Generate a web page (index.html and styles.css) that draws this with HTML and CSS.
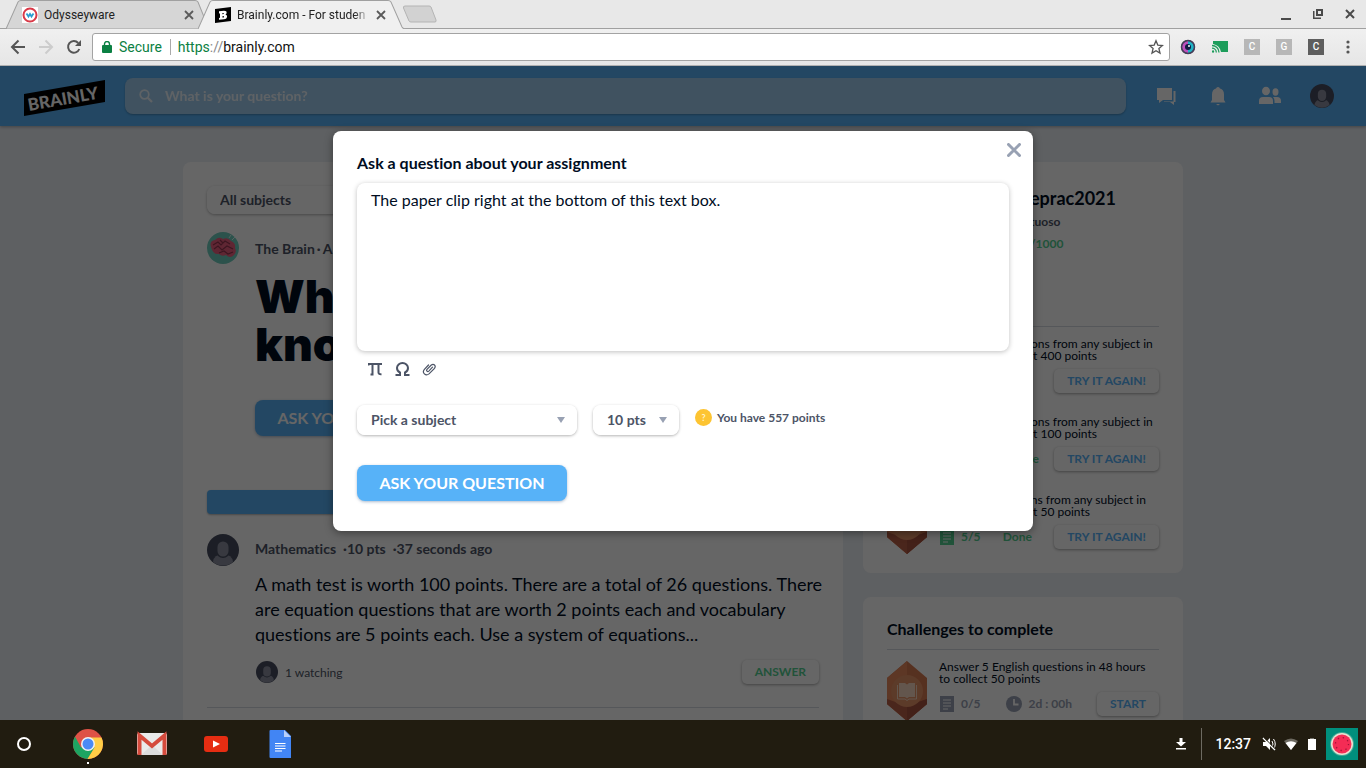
FILE: index.html
```html
<!DOCTYPE html>
<html lang="en">
<head>
<meta charset="utf-8">
<title>Brainly.com - For students</title>
<link rel="stylesheet" href="styles.css">
</head>
<body>
<svg class="defs" aria-hidden="true">
  <defs>
    <symbol id="person" viewBox="0 0 32 32">
      <circle cx="16" cy="16" r="16" fill="#474d60"/>
      <path d="M6 28a10 8 0 0 1 20 0 16 16 0 0 1-20 0z" fill="#8d90a0"/>
      <rect x="9" y="6" width="14" height="18" rx="7" fill="#474d60"/>
      <rect x="10.500" y="7.500" width="11" height="15" rx="5.500" fill="#8d90a0"/>
    </symbol>
    <symbol id="sheet" viewBox="0 0 14 16">
      <path d="M0 0h14v16H0z" fill="currentColor"/>
      <path d="M3 4h8M3 7h8M3 10h8M3 13h5" stroke="#fff" stroke-width="1"/>
    </symbol>
    <symbol id="gem" viewBox="0 0 40 60">
      <path d="M20 0l20 17v26L20 60 0 43V17z" fill="#d87a51"/>
      <path d="M20 0v60L0 43V17z" fill="#e8895c"/>
      <path d="M0 38l20 7 20-7v5L20 60 0 43z" fill="#b85f48"/>
      <path d="M20 45l20-7v5L20 60z" fill="#a9533f"/>
      <circle cx="20" cy="30" r="16" fill="#e69366"/>
    </symbol>
    <symbol id="tabx" viewBox="0 0 10 10"><path d="M1 1l8 8M9 1L1 9" stroke="#5a5a5a" stroke-width="1.800"/></symbol>
  </defs>
</svg>

<div class="tabs">
  <div class="tab">
    <svg class="tab-shape" viewBox="0 0 200 28" preserveAspectRatio="none"><path d="M0 28L12 2Q13 .5 15 .5H189Q191 .5 192 2L200 21 197 28z" fill="#d6d6d6" stroke="#a0a0a0"/></svg>
    <svg width="16" height="16" viewBox="0 0 16 16"><path d="M0 0h16v16H0z" fill="#fff"/><circle cx="8" cy="8" r="6.500" fill="#fff" stroke="#d93a48" stroke-width="2"/><path d="M4.500 6.500l2 3L8 7l1.500 2.500 2-3" fill="none" stroke="#2b9ed0" stroke-width="1.800"/></svg>
    <span class="tab-title">Odysseyware</span>
    <button class="plain" aria-label="Close tab"><svg width="10" height="10"><use href="#tabx"/></svg></button>
  </div>
  <div class="tab active">
    <svg class="tab-shape" viewBox="0 0 208 28" preserveAspectRatio="none"><path d="M0 28L12 2Q13 .5 15 .5H190Q192 .5 193 2L204 26Q205 28 208 28" fill="#f0f0f0" stroke="#a0a0a0"/></svg>
    <svg width="16" height="16" viewBox="0 0 16 16"><path d="M0 2l16-2v14L0 16z" fill="#000"/><path fill-rule="evenodd" d="M4 4.200l5-.5q3 0 2.600 2.200-.2 1-1.200 1.500 1.800.3 1.700 2.100-.2 2.500-3.100 2.800l-5 .5V11l1-.2V6.400l-1 .1zM7.400 6v1.300l1.300-.2V5.900zM7.400 9.200v1.400l1.500-.2V9z" fill="#fff"/></svg>
    <span class="tab-title fade">Brainly.com - For studen</span>
    <button class="plain" aria-label="Close tab"><svg width="10" height="10"><use href="#tabx"/></svg></button>
  </div>
  <button class="plain newtab" aria-label="New tab"><svg width="35" height="18" viewBox="0 0 35 18"><path d="M3 1H27Q28.500 1 29 2L34 15Q34.500 17 33 17H9Q7.500 17 7 16L1.500 3Q1 1 3 1z" fill="#d2d2d2" stroke="#b4b4b4"/></svg></button>
  <div class="window-buttons">
    <button class="plain" aria-label="Minimize"><svg width="10" height="12"><path d="M0 10h10v2H0z" fill="#4a4a4a"/></svg></button>
    <button class="plain" aria-label="Restore"><svg width="10" height="10" viewBox="0 0 10 10" fill="none" stroke="#4a4a4a"><path d="M4 1h5v5H4z" stroke-width="2"/><path d="M.75 2v7.250H8" stroke-width="1.500"/></svg></button>
    <button class="plain" aria-label="Close window"><svg width="10" height="10" viewBox="0 0 10 10"><path d="M1 1l8 8M9 1L1 9" stroke="#4a4a4a" stroke-width="2"/></svg></button>
  </div>
</div>

<div class="toolbar">
  <button class="plain" aria-label="Back"><svg width="16" height="16" viewBox="0 0 16 16" fill="none" stroke="#555" stroke-width="2"><path d="M15 8H2M8.500 1.500L2 8l6.500 6.500"/></svg></button>
  <button class="plain" aria-label="Forward"><svg width="16" height="16" viewBox="0 0 16 16" fill="none" stroke="#ccc" stroke-width="2"><path d="M1 8h13M7.500 1.500L14 8l-6.500 6.500"/></svg></button>
  <button class="plain" aria-label="Reload"><svg width="16" height="16" viewBox="0 0 16 16"><path d="M13.300 10A5.800 5.800 0 1 1 12.200 4" fill="none" stroke="#555" stroke-width="2"/><path d="M15 1v6H9z" fill="#555"/></svg></button>
  <div class="address">
    <svg width="10" height="12" viewBox="0 0 10 12"><rect y="4" width="10" height="8" rx="1" fill="#0b8043"/><path d="M2.500 5V3a2.500 2.500 0 0 1 5 0v2" fill="none" stroke="#0b8043" stroke-width="1.400"/></svg>
    <span class="secure">Secure</span>
    <span class="url"><span class="https">https</span><span class="slashes">://</span>brainly.com</span>
    <button class="plain" aria-label="Bookmark"><svg width="16" height="16" viewBox="0 0 16 16"><path d="M8 1.800l1.800 4.300 4.700.4-3.600 3 1.100 4.600L8 11.700l-4 2.400 1.100-4.600-3.600-3 4.700-.4z" fill="none" stroke="#555" stroke-width="1.300"/></svg></button>
  </div>
  <div class="extensions">
    <svg width="16" height="16" viewBox="0 0 16 16"><circle cx="8" cy="8" r="7" fill="#55306e"/><path d="M8 2a6 6 0 0 0 0 12z" fill="#bd50bd"/><path d="M8 2a6 6 0 0 1 0 12z" fill="#1fb3c6"/><circle cx="8" cy="8" r="6.500" fill="none" stroke="#453f58" stroke-width="1.500"/><circle cx="8" cy="8" r="3" fill="#121b42"/><circle cx="9" cy="7" r="1" fill="#fff"/></svg>
    <svg width="16" height="12" viewBox="0 0 16 12"><path d="M1 0h15v11H9Q7.500 4 1 3z" fill="#1d9d5b"/><g fill="none" stroke="#1d9d5b" stroke-width="1.300"><path d="M0 4.500A7 7 0 0 1 7 11.500M0 7.200a4.300 4.300 0 0 1 4.300 4.300"/></g><circle cx="1" cy="10.500" r="1.200" fill="#1d9d5b"/></svg>
    <span class="ext">C</span><span class="ext">G</span><span class="ext dark">C</span>
    <svg width="16" height="14" viewBox="0 0 16 14" fill="#555"><circle cx="8" cy="2" r="1.600"/><circle cx="8" cy="7" r="1.600"/><circle cx="8" cy="12" r="1.600"/></svg>
  </div>
</div>

<div class="page">
  <header class="site-header">
    <svg width="81" height="40" viewBox="0 -4 81 40"><path d="M0 14L81 0v22L0 36z" fill="#000"/><text x="5" y="31" class="logo-text" transform="rotate(-10 5 31)">BRAINLY</text></svg>
    <label class="search">
      <svg width="14" height="14" viewBox="0 0 14 14" fill="none" stroke="#fff" opacity=".8"><circle cx="5.500" cy="5.500" r="4.300" stroke-width="1.700"/><path d="M8.700 8.700L13 13" stroke-width="2.200"/></svg>
      <input type="text" placeholder="What is your question?" aria-label="What is your question?">
    </label>
    <nav class="site-nav">
      <svg width="24" height="24" viewBox="0 0 24 24" fill="#fff"><path d="M3 4h15v12H9l-4 3v-3H3z"/><path d="M19.500 7H21.500v11H20v3l-4-3h-6v-.5h9.500z"/></svg>
      <svg width="24" height="24" viewBox="0 0 24 24" fill="#fff"><path d="M12 3a2 2 0 0 1 2 1.500q4 1 4 6V16l1.500 2.500h-15L6 16v-5.500q0-5 4-6A2 2 0 0 1 12 3z"/><path d="M10 20h4l-2 1.500z"/></svg>
      <svg width="24" height="24" viewBox="0 0 24 24" fill="#fff"><ellipse cx="8" cy="7" rx="4" ry="4.300"/><path d="M1 20v-3q0-4 4-4h6q4 0 4 4v3z"/><ellipse cx="17.500" cy="8" rx="3" ry="3.700"/><path d="M16.500 19v-2q0-2.500-1.500-4h4q4 0 4 4v2z"/></svg>
      <svg width="24" height="24"><use href="#person"/></svg>
    </nav>
  </header>

  <div class="content">
    <main class="card feed">
      <div class="picker filter">
        <select aria-label="Subject filter"><option>All subjects</option></select>
      </div>
      <article class="post">
        <svg width="32" height="32" viewBox="0 0 32 32"><circle cx="16" cy="16" r="16" fill="#6fcdbd"/><path d="M4 15Q2 9 8 8q4-4 8-1 5-2 8 2 5 2 4 7 2 4-1 7-4 4-8 0-4 2-7-1-6 1-8-7z" fill="#ee5f80"/><path d="M6 13l5-3 3 3 4-4 5 3M7 17l4-3 4 4 5-4 6 3M12 21l5-2 4 3 5-2M13 8l3 3" fill="none" stroke="#963751" stroke-width="1.200"/><path d="M22 6l2-3M25 8l3-3" stroke="#d8f4ef"/></svg>
        <div class="post-body">
          <p class="meta"><span>The Brain</span><span>·</span><span>A few seconds ago</span></p>
          <h1>What do you<br>know?</h1>
          <button class="primary">ASK YOUR QUESTION</button>
        </div>
      </article>
      <div class="banner"></div>
      <article class="post question">
        <svg width="32" height="32"><use href="#person"/></svg>
        <div class="post-body">
          <p class="meta spaced"><span>Mathematics</span><span>·10 pts</span><span>·37 seconds ago</span></p>
          <p class="body-text">A math test is worth 100 points. There are a total of 26 questions. There are equation questions that are worth 2 points each and vocabulary questions are 5 points each. Use a system of equations...</p>
          <div class="post-foot">
            <svg width="22" height="22"><use href="#person"/></svg>
            <span>1 watching</span>
            <button class="small green">ANSWER</button>
          </div>
        </div>
      </article>
    </main>

    <aside class="side">
      <section class="card side-card">
        <div class="profile">
          <h2>eprac2021</h2>
          <p>tuoso</p>
          <p class="green">/1000</p>
        </div>
        <ul class="challenges">
          <li><svg width="40" height="60"><use href="#gem"/></svg>
            <div><p>Answer 20 questions from any subject in 24 hours to collect 400 points</p>
              <div class="status green"><svg width="14" height="16"><use href="#sheet"/></svg><span>20</span><span class="state">Done</span><button class="small blue">TRY IT AGAIN!</button></div></div></li>
          <li><svg width="40" height="60"><use href="#gem"/></svg>
            <div><p>Answer 10 questions from any subject in 24 hours to collect 100 points</p>
              <div class="status green"><svg width="14" height="16"><use href="#sheet"/></svg><span>10/10</span><span class="state">Done</span><button class="small blue">TRY IT AGAIN!</button></div></div></li>
          <li><svg width="40" height="60"><use href="#gem"/></svg>
            <div><p>Answer 5 questions from any subject in 24 hours to collect 50 points</p>
              <div class="status green"><svg width="14" height="16"><use href="#sheet"/></svg><span>5/5</span><span class="state">Done</span><button class="small blue">TRY IT AGAIN!</button></div></div></li>
        </ul>
      </section>
      <section class="card side-card">
        <h3>Challenges to complete</h3>
        <ul class="challenges">
          <li><svg width="40" height="60" viewBox="0 0 40 60"><use href="#gem"/><path d="M12 22h6l2 1.500 2-1.500h6v14h-6l-2 1.500-2-1.500h-6z" fill="#f7d6c0"/><path d="M10.500 24v14H18l2 1.500 2-1.500h7.500V24" fill="none" stroke="#f7d6c0"/></svg>
            <div><p>Answer 5 English questions in 48 hours to collect 50 points</p>
              <div class="status"><svg width="14" height="16"><use href="#sheet"/></svg><span>0/5</span>
                <span class="state timer"><svg width="16" height="16" viewBox="0 0 16 16"><circle cx="8" cy="8" r="8" fill="currentColor"/><path d="M8 3v5.500h4.500" fill="none" stroke="#fff" stroke-width="1.800"/></svg>2d : 00h</span>
                <button class="small blue">START</button></div></div></li>
        </ul>
      </section>
    </aside>
  </div>

  <div class="overlay">
    <form class="modal" role="dialog" aria-labelledby="ask-title">
      <button type="button" class="plain close" aria-label="Close"><svg width="14" height="14" viewBox="0 0 14 14"><path d="M1.500 1.500l11 11M12.500 1.500l-11 11" stroke="#98a1b3" stroke-width="3" stroke-linecap="round"/></svg></button>
      <label id="ask-title" for="ask">Ask a question about your assignment</label>
      <textarea id="ask">The paper clip right at the bottom of this text box.</textarea>
      <div class="tools">
        <button type="button" class="plain" aria-label="Equation"><svg width="15" height="14" viewBox="0 0 15 14" fill="none" stroke="#4c5466" stroke-width="2"><path d="M.5 3.500V2H14M4.500 2v11M10.500 2v8.500q0 2 3 1.700M2.500 12.500h3"/></svg></button>
        <button type="button" class="plain" aria-label="Symbols"><svg width="15" height="14" viewBox="0 0 15 14" fill="none" stroke="#4c5466" stroke-width="2"><path d="M.5 13H5v-2.500Q2 9 2 6a5.500 5 0 0 1 11 0q0 3-3 4.500V13h4.500"/></svg></button>
        <button type="button" class="plain" aria-label="Attach file"><svg width="15" height="14" viewBox="0 0 15 14" fill="none" stroke="#4c5466" stroke-width="1.200" stroke-linecap="round"><path d="M10.500 5.200L6.800 9.100Q5.800 9.900 5 9.100t0-1.700L9.300 3q1.800-1.400 3.200 0t0 3.400L7 11.900q-2.500 2-4.600 0t0-4.600L6.500 3"/></svg></button>
      </div>
      <div class="options">
        <div class="picker subject"><select aria-label="Subject"><option>Pick a subject</option></select></div>
        <div class="picker points"><select aria-label="Points"><option>10 pts</option></select></div>
        <p class="balance"><span class="coin">?</span>You have 557 points</p>
      </div>
      <button type="button" class="primary">ASK YOUR QUESTION</button>
    </form>
  </div>
</div>

<footer class="shelf">
  <svg width="48" height="48" viewBox="0 0 48 48"><circle cx="24" cy="24" r="6" fill="none" stroke="#fff" stroke-width="2"/></svg>
  <svg width="48" height="48" viewBox="0 0 48 48"><circle cx="24" cy="24" r="15" fill="#de5246"/><path d="M11 16.500A15 15 0 0 0 23.500 39L31 27.500 24 24l-7 3.500z" fill="#1da462"/><path d="M37.500 17.500H24l6.500 10L23.500 39A15 15 0 0 0 37.500 17.500z" fill="#ffcd46"/><circle cx="24" cy="24" r="7" fill="#f1f1f1"/><circle cx="24" cy="24" r="5.500" fill="#4a8af4"/><path d="M23 42h2v2h-2z" fill="#fff"/></svg>
  <svg width="48" height="48" viewBox="0 0 48 48"><rect x="9" y="13" width="30" height="22" rx="2" fill="#eaeaea"/><path d="M13 35l11-10 11 10z" fill="#dcdcdc"/><path d="M11.500 35V15.500L24 26l12.500-10.500V35" fill="none" stroke="#d54b3d" stroke-width="4"/></svg>
  <svg width="48" height="48" viewBox="0 0 48 48"><rect x="12" y="16" width="24" height="16" rx="3" fill="#e62d12"/><path d="M21 20.500l7 3.500-7 3.500z" fill="#fff"/></svg>
  <svg width="48" height="48" viewBox="0 0 48 48"><path d="M14.500 10H29l6 6v22H14.500q-1 0-1-1V11q0-1 1-1z" fill="#4285f4"/><path d="M28 10l7 7h-7z" fill="#b8d0fb"/><path d="M19 23.500h10.500M19 26h10.500M19 28.500h10.500M19 31h7" stroke="#fff" stroke-width="1.200"/></svg>
  <div class="tray">
    <svg width="10" height="12" viewBox="0 0 10 12" fill="#fff"><path d="M3.500 0h3v4H10L5 8.500 0 4h3.500zM0 10h10v1.500H0z"/></svg>
    <span class="clock">12:37</span>
    <svg width="14" height="14" viewBox="0 0 14 14"><path d="M1 5h3l4-4v12L4 9H1z" fill="#fff"/><path d="M10 4q2 3 0 6M11.500 2q3.500 5 0 10" fill="none" stroke="#fff"/><path d="M1 1l12 12" stroke="#fff" stroke-width="1.500"/><path d="M2.500 1l11 11" stroke="#211c10" stroke-width="1"/></svg>
    <svg width="14" height="12" viewBox="0 0 14 12"><path d="M0 3q7-5 14 0L7 12z" fill="#6d6a61"/><path d="M1.500 5q5.500-3.500 11 0L7 12z" fill="#fff"/></svg>
    <svg class="battery" width="8" height="12" viewBox="0 0 8 12"><path d="M2 0h4v1H2z" fill="#77746c"/><path d="M0 1h8v11H0z" fill="#fff"/></svg>
    <svg width="32" height="32" viewBox="0 0 32 32"><path d="M0 0h32v32H0z" fill="#008f7c"/><circle cx="16" cy="16" r="12" fill="#45ab98"/><circle cx="16" cy="16" r="11" fill="#ece0d0"/><circle cx="16" cy="16" r="9.500" fill="#f42c55"/><circle cx="16" cy="16" r="6.500" fill="none" stroke="#a01436" stroke-width="1.300" stroke-dasharray="1.300 3.800"/></svg>
  </div>
</footer>
</body>
</html>
```
FILE: styles.css
```css
* { box-sizing: border-box; }

body {
  margin: 0;
  height: 100vh;
  display: flex;
  flex-direction: column;
  overflow: hidden;
  font-family: Lato, "Liberation Sans", sans-serif;
  font-variant-ligatures: none;
  color: #000d1f;
}

h1, h2, h3, p, ul { margin: 0; padding: 0; }
svg { display: block; flex: none; }
button, select, input, textarea { font: inherit; font-variant-ligatures: none; color: inherit; }
button { cursor: pointer; }
.plain { border: 0; padding: 0; background: none; }
.defs { position: absolute; width: 0; height: 0; }

/* browser frame */
.tabs {
  display: flex;
  height: 29px;
  flex: none;
  padding-left: 6px;
  background: #e8e8e8;
  border-bottom: 1px solid #a0a0a0;
  font: 12px/28px Roboto, sans-serif;
  color: #222;
}
.tab {
  position: relative;
  display: flex;
  align-items: center;
  gap: 6px;
  width: 200px;
  height: 29px;
  padding: 0 12px 0 16px;
}
.tab.active { width: 208px; margin-left: -8px; padding: 0 20px 0 17px; }
.tab > * { position: relative; }
.tab .tab-shape { position: absolute; left: 0; top: 0; width: 100%; height: 29px; }
.tab-title { flex: 1; white-space: nowrap; }
.fade { -webkit-mask-image: linear-gradient(to right, #000 88%, transparent); mask-image: linear-gradient(to right, #000 88%, transparent); }
.newtab { margin-left: -4px; }
.window-buttons { display: flex; align-items: center; gap: 22px; margin-left: auto; padding-right: 11px; }

.toolbar {
  display: flex;
  align-items: center;
  gap: 12px;
  height: 37px;
  flex: none;
  padding: 0 10px;
  background: linear-gradient(#f0f0f0, #e6e6e6);
  border-bottom: 1px solid #b0b0b0;
}
.address {
  display: flex;
  align-items: center;
  gap: 7px;
  flex: 1;
  height: 28px;
  margin: 0 -2px;
  padding: 0 5px 0 9px;
  border: 1px solid #a3a3a3;
  border-radius: 3px;
  background: #fff;
  font: 14px/20px Roboto, sans-serif;
  color: #111;
}
.secure { padding-right: 8px; border-right: 1px solid #aaa; color: #0b8043; line-height: 16px; }
.url { flex: 1; }
.https { color: #0b8043; }
.slashes { color: #888; }
.extensions { display: flex; align-items: center; gap: 16px; }
.ext {
  width: 16px;
  background: #b7b7b7;
  color: #fff;
  font: 500 10px/16px Roboto, sans-serif;
  text-align: center;
}
.ext.dark { background: #5e5e5e; }

/* site */
.page { position: relative; flex: 1; min-height: 0; overflow: hidden; background: #ebeff5; }
.site-header {
  display: flex;
  align-items: center;
  gap: 20px;
  height: 60px;
  padding: 0 32px 0 24px;
  background: #57b2f8;
  box-shadow: 0 1px 3px rgba(0, 0, 0, .3);
}
.logo-text { font: 900 17px Lato, sans-serif; fill: #fff; }
.search {
  display: flex;
  align-items: center;
  gap: 12px;
  flex: 1;
  height: 36px;
  padding: 0 14px;
  border-radius: 8px;
  background: #a1cdf0;
  box-shadow: 0 1px 2px rgba(0, 0, 0, .25);
}
.search input {
  flex: 1;
  border: 0;
  padding: 0 0 2px;
  background: none;
  font-size: 14px;
  font-weight: 700;
}
.search input::placeholder { color: #fff; opacity: .8; }
.site-nav { display: flex; gap: 28px; padding-left: 8px; }

.content {
  display: flex;
  align-items: flex-start;
  gap: 20px;
  max-width: 1000px;
  margin: 36px auto 0;
}
.card { border-radius: 8px; background: #fff; }
.feed { flex: 1; height: 800px; padding: 24px; }
.picker { position: relative; height: 30px; border-radius: 8px; box-shadow: 0 1px 3px rgba(0, 0, 0, .3); }
.picker select {
  width: 100%;
  height: 30px;
  padding: 0 14px 2px;
  border: 0;
  border-radius: 8px;
  background: #fff;
  appearance: none;
  font-size: 14px;
  font-weight: 700;
  color: #4c5466;
}
.picker::after {
  content: "";
  position: absolute;
  right: 12px;
  top: 12px;
  border: 4px solid transparent;
  border-top: 6px solid #98a1b3;
  border-bottom: 0;
}
.filter { width: 220px; height: 28px; }
.filter select { height: 28px; padding: 0 13px 1px; }

.post { display: flex; gap: 16px; margin-top: 18px; }
.post-body { flex: 1; }
.meta {
  display: flex;
  gap: 2px;
  font-size: 14px;
  line-height: 34px;
  font-weight: 700;
  color: #4c5466;
}
.spaced { gap: 7px; line-height: 30px; }
h1 { margin-top: 6px; font: 900 46px/48px Inter, "Open Sans", sans-serif; }
.primary {
  display: block;
  width: 210px;
  height: 36px;
  padding: 0 0 1px;
  border: 0;
  border-radius: 8px;
  background: #57b2f8;
  box-shadow: 0 1px 3px rgba(87, 120, 160, .5);
  font-size: 16px;
  font-weight: 700;
  color: #fff;
}
.post .primary { margin-top: 32px; }
.banner { height: 24px; margin-top: 54px; border-radius: 4px; background: #57b2f8; box-shadow: 0 1px 2px rgba(0, 0, 0, .3); }
.question { margin-top: 20px; padding-bottom: 23px; border-bottom: 1px solid #d5d9e0; }
.body-text { margin: 8px -12px 0 0; font-size: 18px; line-height: 25px; }
.post-foot { display: flex; align-items: center; gap: 7px; margin-top: 13px; padding-left: 1px; font-size: 12px; color: #4c5466; }
.small {
  height: 24px;
  margin-left: auto;
  padding: 0 13px 1px;
  border: 0;
  border-radius: 5px;
  background: #fff;
  box-shadow: 0 1px 3px rgba(0, 0, 0, .35);
  font-size: 12px;
  font-weight: 700;
  white-space: nowrap;
}
.green { color: #53cf92; }
.blue { color: #57b2f8; }

.side { display: flex; flex-direction: column; gap: 24px; width: 320px; }
.side-card { padding: 24px 24px 19px; }
.profile { height: 140px; padding-left: 143px; font-size: 12px; line-height: 22px; font-weight: 700; }
h2 { font-size: 18px; line-height: 25px; }
.profile p { color: #4c5466; }
.profile .green { color: #53cf92; }
h3 { font-size: 16px; line-height: 16px; padding-bottom: 12px; }
.challenges {
  display: flex;
  flex-direction: column;
  gap: 18px;
  padding-top: 11px;
  border-top: 1px solid #d5d9e0;
  list-style: none;
  font-size: 12px;
  line-height: 12px;
}
.challenges li { display: flex; gap: 12px; }
.challenges li > div { flex: 1; }
.status { display: flex; align-items: center; margin-top: 7px; padding-left: 1px; color: #98a1b3; font-weight: 700; }
.status > svg { margin-right: 7px; }
.status > .small { margin-left: 0; }
.status.green { color: #53cf92; }
.state { margin: 0 auto; }
.timer { display: flex; align-items: center; gap: 7px; white-space: nowrap; }

/* dialog */
.overlay {
  position: absolute;
  inset: 0;
  display: flex;
  justify-content: center;
  align-items: flex-start;
  padding-top: 65px;
  background: rgba(0, 0, 0, .6);
}
.modal {
  position: relative;
  width: 700px;
  padding: 24px 24px 30px;
  border-radius: 8px;
  background: #fff;
  box-shadow: 0 2px 8px rgba(0, 0, 0, .4);
}
.close { position: absolute; right: 12px; top: 12px; }
.modal label { display: block; font-size: 16px; line-height: 16px; font-weight: 700; }
textarea {
  display: block;
  width: 100%;
  height: 168px;
  margin-top: 12px;
  padding: 7px 14px;
  border: 0;
  border-radius: 8px;
  outline: 0;
  resize: none;
  box-shadow: 0 1px 5px rgba(0, 0, 0, .25);
  font-size: 16px;
  line-height: 20px;
}
.tools { display: flex; gap: 12px; padding: 11px 0 0 11px; }
.options { display: flex; gap: 16px; margin: 29px 0 30px; }
.subject { width: 220px; }
.points { width: 86px; }
.balance { display: flex; align-items: center; gap: 5px; height: 24px; font-size: 12px; font-weight: 700; color: #4c5466; }
.coin {
  width: 17px;
  border-radius: 50%;
  background: #fdc432;
  color: #fff3c9;
  font-size: 9px;
  line-height: 17px;
  text-align: center;
}

/* shelf */
.shelf { display: flex; align-items: center; gap: 16px; flex: none; height: 48px; background: #211c10; }
.tray { display: flex; align-items: center; gap: 8px; margin-left: auto; padding-right: 8px; }
.battery { margin: 0 2px; }
.clock {
  margin: 0 3px 0 7px;
  padding-left: 13px;
  border-left: 1px solid #6d6a61;
  font: 500 14px/32px Roboto, sans-serif;
  color: #fff;
}
```
